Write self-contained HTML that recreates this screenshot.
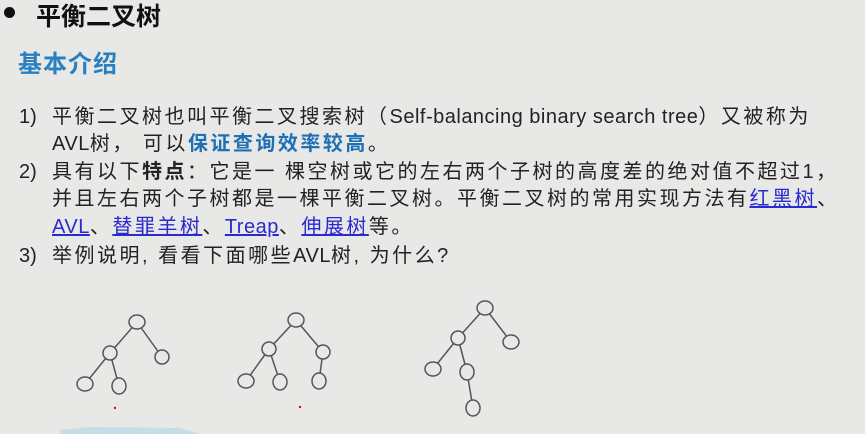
<!DOCTYPE html>
<html><head><meta charset="utf-8"><style>
body{margin:0;width:865px;height:434px;background:#e8e9e6;overflow:hidden;position:relative;font-family:"Liberation Sans","Noto Sans CJK SC",sans-serif;color:#222}
.a{position:absolute;white-space:nowrap}
.t{font-size:20px;letter-spacing:2.5px;line-height:22px}
.l{letter-spacing:0.5px}
.b{color:#1f6fb5;font-weight:bold}
a{color:#2a2ad0;text-decoration:underline}
</style></head><body>
<div class="a" style="left:4px;top:7px;width:11px;height:11px;border-radius:50%;background:#111"></div>
<div class="a" style="left:36px;top:-3px;font-size:25px;font-weight:bold;color:#111">平衡二叉树</div>
<div class="a" style="left:18px;top:44px;font-size:24px;font-weight:bold;color:#2a7fc0;letter-spacing:1px">基本介绍</div>
<div class="a t" style="left:19px;top:106px;letter-spacing:0">1)</div>
<div class="a t" style="left:52px;top:106px">平衡二叉树也叫平衡二叉搜索树（<span class="l">Self-balancing binary search tree</span>）又被称为</div>
<div class="a t" style="left:52px;top:133px"><span class="l">AVL</span>树， 可以<span class="b">保证查询效率较高</span>。</div>
<div class="a t" style="left:19px;top:161px;letter-spacing:0">2)</div>
<div class="a t" style="left:52px;top:161px">具有以下<b>特点</b>：它是一 棵空树或它的左右两个子树的高度差的绝对值不超过1，</div>
<div class="a t" style="left:52px;top:188px">并且左右两个子树都是一棵平衡二叉树。平衡二叉树的常用实现方法有<a>红黑树</a>、</div>
<div class="a t" style="left:52px;top:216px"><a class="l">AVL</a>、<a>替罪羊树</a>、<a class="l">Treap</a>、<a>伸展树</a>等。</div>
<div class="a t" style="left:19px;top:245px;letter-spacing:0">3)</div>
<div class="a t" style="left:52px;top:245px">举例说明, 看看下面哪些<span class="l">AVL</span>树, 为什么?</div>
<svg class="a" style="left:0;top:0" width="865" height="434">
<g stroke="#555" stroke-width="1.5" fill="none">
<path d="M137,322L110,353M137,322L162,357M110,353L85,384M110,353L119,386"/>
<path d="M296,320L269,349M296,320L323,352M269,349L246,381M269,349L280,382M323,352L319,381"/>
<path d="M485,308L458,338M485,308L511,342M458,338L433,369M458,338L467,372M467,372L473,408"/>
<g fill="#e8e9e6">
<ellipse cx="137" cy="322" rx="8" ry="7"/><ellipse cx="110" cy="353" rx="7" ry="7"/><ellipse cx="162" cy="357" rx="7" ry="7"/><ellipse cx="85" cy="384" rx="8" ry="7"/><ellipse cx="119" cy="386" rx="7" ry="8"/>
<ellipse cx="296" cy="320" rx="8" ry="7"/><ellipse cx="269" cy="349" rx="7" ry="7"/><ellipse cx="323" cy="352" rx="7" ry="7"/><ellipse cx="246" cy="381" rx="8" ry="7"/><ellipse cx="280" cy="382" rx="7" ry="8"/><ellipse cx="319" cy="381" rx="7" ry="8"/>
<ellipse cx="485" cy="308" rx="8" ry="7"/><ellipse cx="458" cy="338" rx="7" ry="7"/><ellipse cx="511" cy="342" rx="8" ry="7"/><ellipse cx="433" cy="369" rx="8" ry="7"/><ellipse cx="467" cy="372" rx="7" ry="8"/><ellipse cx="473" cy="408" rx="7" ry="8"/>
</g></g>
<circle cx="115" cy="408" r="1.2" fill="#e00"/><circle cx="300" cy="407" r="1.2" fill="#e00"/>
<path d="M60,434L60,430L90,427L180,428L200,434Z" fill="#c6dde6"/>
</svg>
</body></html>
